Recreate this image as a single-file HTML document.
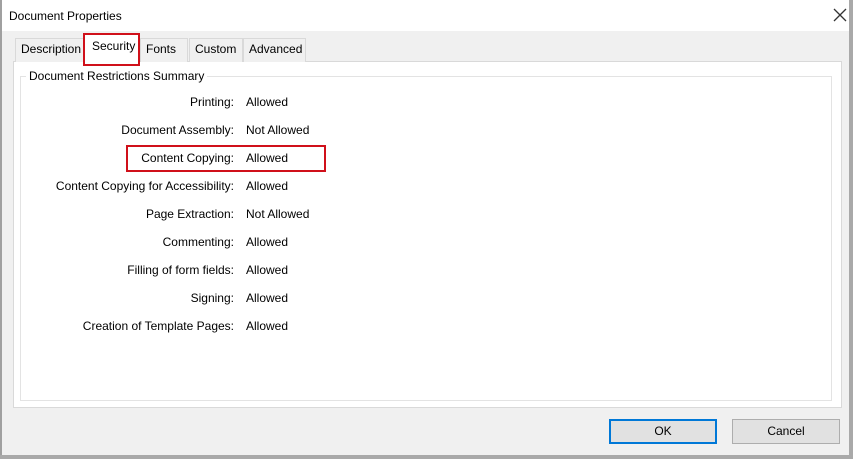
<!DOCTYPE html>
<html><head><style>
body{margin:0;width:853px;height:459px;position:relative;overflow:hidden;background:#f0f0f0;font-family:"Liberation Sans",sans-serif;font-size:12px;color:#000}
.a{position:absolute;box-sizing:border-box}
.t{position:absolute;white-space:nowrap}
.tab{position:absolute;top:38px;height:24px;background:#f0f0f0;border:1px solid #d9d9d9;border-bottom:none;box-sizing:border-box;padding:3px 0 0 5px}
.l{position:absolute;right:619px;white-space:nowrap}
.v{position:absolute;left:246px;white-space:nowrap}
.btn{position:absolute;top:419px;height:25px;width:108px;background:#e1e1e1;border:1px solid #adadad;box-sizing:border-box;text-align:center;line-height:23px}
</style></head><body>
<div class="a" style="left:0;top:0;width:853px;height:31px;background:#fff"></div>
<div class="t" style="left:9px;top:9px">Document Properties</div>
<svg class="a" style="left:833px;top:8px" width="14" height="14"><path d="M1 1L13 13M13 1L1 13" stroke="#333" stroke-width="1.3"/></svg>
<div class="a" style="left:0;top:0;width:2px;height:459px;background:#a0a0a0"></div>
<div class="a" style="left:849px;top:0;width:4px;height:459px;background:#a9a9a9"></div>
<div class="a" style="left:0;top:455px;width:853px;height:4px;background:#a9a9a9"></div>
<div class="a" style="left:13px;top:61px;width:829px;height:347px;background:#fff;border:1px solid #d9d9d9"></div>
<div class="a" style="left:20px;top:76px;width:812px;height:325px;border:1px solid #e3e3e3"></div>
<div class="tab" style="left:15px;width:69px">Description</div>
<div class="a" style="left:84px;top:35px;width:55px;height:28px;background:#fff"></div>
<div class="t" style="left:92px;top:39px">Security</div>
<div class="tab" style="left:140px;width:48px">Fonts</div>
<div class="tab" style="left:189px;width:54px">Custom</div>
<div class="tab" style="left:243px;width:63px">Advanced</div>
<div class="a" style="left:83px;top:33px;width:57px;height:33px;border:2px solid #d0101a"></div>
<div class="t" style="left:26px;top:69px;background:#fff;padding:0 3px">Document Restrictions Summary</div>
<div class="l" style="top:95px">Printing:</div><div class="v" style="top:95px">Allowed</div>
<div class="l" style="top:123px">Document Assembly:</div><div class="v" style="top:123px">Not Allowed</div>
<div class="l" style="top:151px">Content Copying:</div><div class="v" style="top:151px">Allowed</div>
<div class="l" style="top:179px">Content Copying for Accessibility:</div><div class="v" style="top:179px">Allowed</div>
<div class="l" style="top:207px">Page Extraction:</div><div class="v" style="top:207px">Not Allowed</div>
<div class="l" style="top:235px">Commenting:</div><div class="v" style="top:235px">Allowed</div>
<div class="l" style="top:263px">Filling of form fields:</div><div class="v" style="top:263px">Allowed</div>
<div class="l" style="top:291px">Signing:</div><div class="v" style="top:291px">Allowed</div>
<div class="l" style="top:319px">Creation of Template Pages:</div><div class="v" style="top:319px">Allowed</div>
<div class="a" style="left:126px;top:145px;width:200px;height:27px;border:2px solid #d0101a"></div>
<div class="btn" style="left:609px;border:2px solid #0078d7;line-height:21px">OK</div>
<div class="btn" style="left:732px">Cancel</div>
</body></html>
